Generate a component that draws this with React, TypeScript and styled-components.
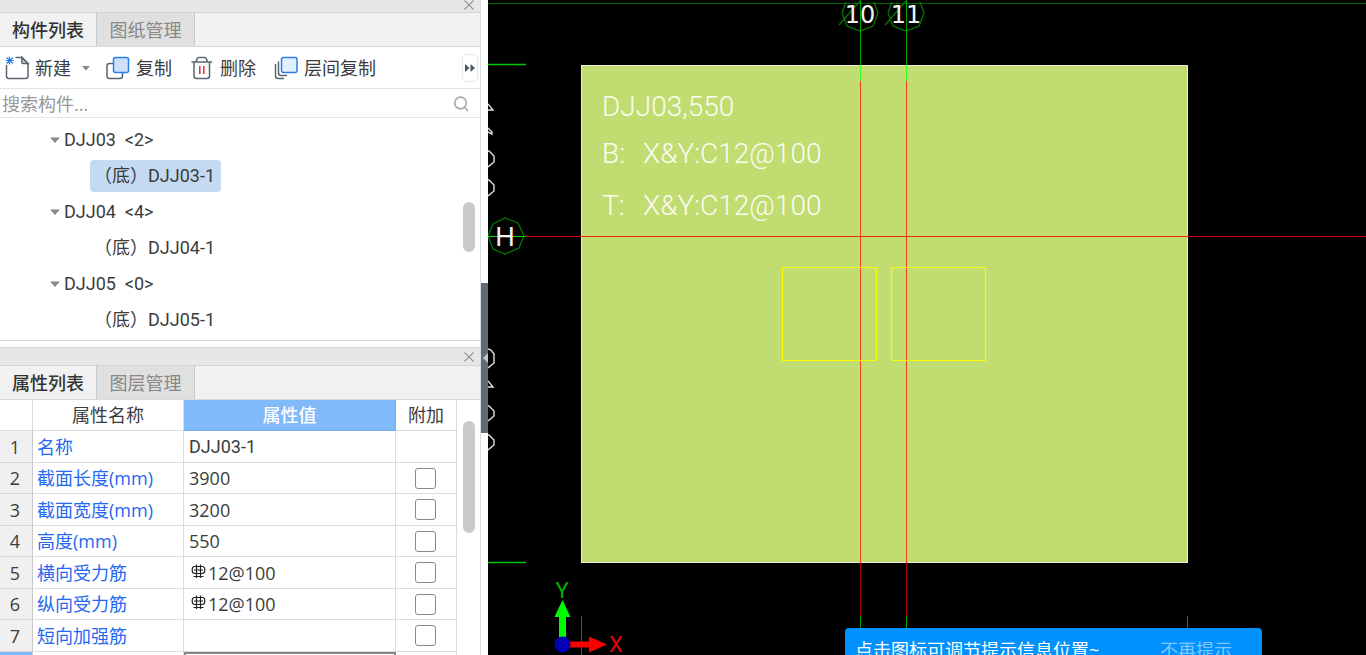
import React from "react";
import styled, { createGlobalStyle } from "styled-components";

const GlobalStyle = createGlobalStyle`
  *, *::before, *::after { box-sizing: border-box; }
  body {
    margin: 0;
    background: #fff;
    color: #3c3c3c;
    font-family: "Open Sans", "Noto Sans CJK SC", sans-serif;
    font-size: 18px;
    line-height: 24px;
  }
  button, input { font: inherit; color: inherit; }
  button { padding: 0; border: 0; background: none; }
`;

const CODE_FONT = `Roboto, "Noto Sans CJK SC", sans-serif`;

const Workspace = styled.div`
  display: flex;
  height: 100vh;
  overflow: hidden;
`;

const Sidebar = styled.aside`
  flex: none;
  display: flex;
  flex-direction: column;
  gap: 6px;
  width: 481px;
  border-right: 1px solid #dcdcdc;
`;

const Panel = styled.section<{ $grow?: boolean }>`
  display: flex;
  flex-direction: column;
  flex: ${(p) => (p.$grow ? "1" : "none")};
  min-height: 0;
  overflow: hidden;
`;

const TitleStrip = styled.header<{ $tall?: boolean }>`
  flex: none;
  display: flex;
  align-items: center;
  justify-content: flex-end;
  height: ${(p) => (p.$tall ? 19 : 13)}px;
  padding: ${(p) => (p.$tall ? "0 6px 0 0" : "0 6px 3px 0")};
  background: #e7e7e7;
  border-top: ${(p) => (p.$tall ? "1px solid #d6d6d6" : "0")};
  border-bottom: 1px solid #d2d4d6;
`;

const CloseButton = styled.button`
  display: flex;
  width: 10px;
  height: 10px;
`;

const TabBar = styled.div`
  flex: none;
  display: flex;
  height: 34px;
  background: #f1f1f1;
  border-bottom: 1px solid #d8dadc;
`;

const Tab = styled.button<{ $active?: boolean }>`
  width: ${(p) => (p.$active ? 97 : 98)}px;
  border-right: 1px solid #c6cacf;
  background: ${(p) => (p.$active ? "#f1f1f1" : "#e0e0e0")};
  color: ${(p) => (p.$active ? "#333" : "#888")};
  font-weight: ${(p) => (p.$active ? 500 : 400)};
`;

const Toolbar = styled.div`
  flex: none;
  display: flex;
  align-items: center;
  height: 42px;
  padding: 1px 2px 0 5px;
  border-bottom: 1px solid #e4e4e4;
`;

const ToolButton = styled.button<{ $gap?: number }>`
  display: flex;
  align-items: center;
  gap: 5px;
  margin-right: ${(p) => p.$gap ?? 18}px;
`;

const MoreButton = styled.button`
  display: flex;
  align-items: center;
  justify-content: center;
  width: 16px;
  height: 28px;
  margin-left: auto;
  border: 1px solid #e8e8e8;
  border-radius: 5px;
`;

const SearchRow = styled.label`
  flex: none;
  display: flex;
  align-items: center;
  height: 29px;
  padding: 1px 11px 0 2px;
  border-bottom: 1px solid #e4e4e4;
`;

const SearchInput = styled.input`
  flex: 1;
  min-width: 0;
  padding: 0;
  border: 0;
  outline: 0;
  background: none;
  &::placeholder { color: #999; opacity: 1; }
`;

const TreeArea = styled.div`
  display: flex;
  border-bottom: 1px solid #dadada;
  font-family: ${CODE_FONT};
`;

const TreeList = styled.ul`
  flex: 1;
  margin: 0;
  padding: 4px 0 2px 50px;
  list-style: none;
`;

const TreeItem = styled.li`
  display: flex;
  align-items: center;
  height: 36px;
`;

const GroupButton = styled.button`
  display: flex;
  align-items: center;
  gap: 4px;
  white-space: pre;
`;

const LeafButton = styled.button<{ $selected?: boolean }>`
  height: 32px;
  margin-left: 40px;
  padding: 0 6px 0 4px;
  border-radius: 4px;
  background: ${(p) => (p.$selected ? "#c3daf2" : "transparent")};
`;

const ScrollTrack = styled.div<{ $offset: number }>`
  flex: none;
  width: 17px;
  padding-top: ${(p) => p.$offset}px;
`;

const ScrollThumb = styled.div<{ $length: number }>`
  width: 12px;
  height: ${(p) => p.$length}px;
  border-radius: 6px;
  background: #cacaca;
`;

const TableArea = styled.div`
  display: flex;
  flex: 1;
  gap: 6px;
  min-height: 0;
  overflow: hidden;
`;

const PropertyTable = styled.table`
  flex: none;
  align-self: flex-start;
  width: 457px;
  table-layout: fixed;
  border-spacing: 0;
  tbody tr { height: 31px; }
  tbody tr:nth-child(odd) { height: 32px; }
`;

const HeadCell = styled.th<{ $w: number; $on?: boolean }>`
  width: ${(p) => p.$w}px;
  height: 31px;
  padding: 0;
  border-right: 1px solid ${(p) => (p.$on ? "#74aff0" : "#dcdcdc")};
  border-bottom: 1px solid ${(p) => (p.$on ? "#74aff0" : "#dcdcdc")};
  background: ${(p) => (p.$on ? "#80baf9" : "#fff")};
  color: ${(p) => (p.$on ? "#fff" : "inherit")};
  font-weight: ${(p) => (p.$on ? 500 : 400)};
`;

const IndexCell = styled.th<{ $on?: boolean }>`
  padding: 0 2px 0 0;
  border-right: 1px solid #c8c8c8;
  border-bottom: 1px solid #d4d4d4;
  background: ${(p) => (p.$on ? "#80baf9" : "#f0f0f0")};
  font-weight: 400;
`;

const Cell = styled.td<{ $kind?: "name" | "code" | "check" | "editing" }>`
  padding: ${(p) => (p.$kind === "check" ? "0 1px 0 0" : p.$kind === "name" ? "0 4px" : "0 5px")};
  border-right: 1px solid #dcdcdc;
  border-bottom: 1px solid #dcdcdc;
  color: ${(p) => (p.$kind === "name" ? "#2468f2" : "inherit")};
  text-align: ${(p) => (p.$kind === "check" ? "center" : "left")};
  ${(p) => p.$kind === "code" && `font-family: ${CODE_FONT};`}
  ${(p) => p.$kind === "editing" && "border: 2px solid #858585;"}
`;

const RebarValue = styled.span`
  display: flex;
  align-items: center;
  gap: 2px;
  padding-left: 2px;
`;

const Checkbox = styled.input`
  appearance: none;
  display: block;
  width: 21px;
  height: 21px;
  margin: 0 auto;
  border: 1px solid #8a8a8a;
  border-radius: 3px;
  background: #fff;
`;

const Splitter = styled.div`
  flex: none;
  display: flex;
  align-items: center;
  width: 7px;
  padding-top: 61px;
  background: #fff;
`;

const CollapseButton = styled.button`
  display: flex;
  align-items: center;
  justify-content: flex-end;
  width: 7px;
  height: 150px;
  background: #5f6b77;
`;

const Viewport = styled.main`
  position: relative;
  flex: 1;
  min-width: 0;
  overflow: hidden;
  background: #000;
`;

const Drawing = styled.svg`
  display: block;
  width: 100%;
  height: 100%;
`;

const Toast = styled.div`
  position: absolute;
  right: 104px;
  bottom: -17px;
  display: flex;
  align-items: center;
  justify-content: space-between;
  width: 417px;
  height: 44px;
  padding: 0 30px 0 10px;
  border-radius: 4px;
  background: #0091ff;
  color: #fff;
`;

const DismissButton = styled.button`
  color: #80c8ff;
`;

const INK = "#5b6472";
const BLUE = "#2b7de9";

const CloseIcon = () => (
  <svg width="10" height="10" viewBox="0 0 10 10" stroke="#999" strokeWidth="1.3" aria-hidden="true">
    <path d="M0.5 0.5 9.5 9.5M9.5 0.5 0.5 9.5" />
  </svg>
);

const NewIcon = () => (
  <svg width="25" height="26" viewBox="0 0 25 26" fill="none" stroke={INK} strokeWidth="1.5" aria-hidden="true">
    <path d="M1.5 10V21q0 2.5 2.5 2.5H20.5q2.5 0 2.5-2.5V8.5L17 2.5H10.5" />
    <path d="M16.8 2.5V7q0 1.5 1.5 1.5H23z" fill={INK} fillOpacity="0.25" />
    <path d="M4.5 1.5v8M0.8 5.5h8M1.5 2.5l6.5 6M8 2.500l-6.5 6" stroke={BLUE} strokeWidth="1.2" />
  </svg>
);

const CopyIcon = () => (
  <svg width="26" height="26" viewBox="0 0 26 26" fill="none" stroke={INK} strokeWidth="1.5" aria-hidden="true">
    <path d="M8 8.5H4.5q-2.5 0-2.5 2.5V21q0 2.5 2.5 2.5H15q2.5 0 2.5-2.5V17.5" />
    <rect x="8.5" y="2.5" width="15" height="15" rx="2" fill="#cfe1fa" stroke={BLUE} />
  </svg>
);

const DeleteIcon = () => (
  <svg width="25" height="26" viewBox="0 0 25 26" fill="none" stroke={INK} strokeWidth="1.5" aria-hidden="true">
    <path d="M1.5 7H22M6 7l1-3q.5-1.5 2-1.5h5.5q1.5 0 2 1.5l1 3M4 7V21q0 2.5 2.5 2.5H17q2.5 0 2.5-2.5V7" />
    <path d="M9.8 11v8M13.8 11v8" stroke="#e02f2f" />
  </svg>
);

const LayerCopyIcon = () => (
  <svg width="25" height="26" viewBox="0 0 25 26" fill="none" stroke={INK} strokeWidth="1.5" aria-hidden="true">
    <path d="M1.5 9V21q0 2.5 2.5 2.5H10M4.5 6.5V18q0 2.5 2.5 2.5H13" />
    <rect x="7.5" y="2.5" width="15.5" height="15" rx="2" fill="#e4effd" stroke={BLUE} />
  </svg>
);

const Caret = ({ width = 10 }: { width?: number }) => (
  <svg width={width} height="6" viewBox="0 0 10 6" aria-hidden="true">
    <path d="M0 0.5H10L5 6z" fill="#8a8a8a" />
  </svg>
);

const SearchIcon = () => (
  <svg width="16" height="16" viewBox="0 0 16 16" fill="none" stroke="#aaa" strokeWidth="1.7" aria-hidden="true">
    <circle cx="7.5" cy="7" r="5.8" />
    <path d="M11.5 11.5 15 15" />
  </svg>
);

const RebarIcon = () => (
  <svg width="15" height="18" viewBox="0 0 15 18" fill="none" stroke="#222" strokeWidth="1.2" aria-hidden="true">
    <path d="M5.5 0.5V14M9.500 0.500V14M5 2.500H3.500Q1.200 2.500 1.200 6t2.300 3.500H11.500Q13.800 9.500 13.800 6T11.500 2.500H5M3 6H12M2.500 12.500H12.500" />
  </svg>
);

interface PanelHeadProps {
  active: string;
  other: string;
  tall?: boolean;
}

const PanelHead = ({ active, other, tall }: PanelHeadProps) => (
  <>
    <TitleStrip $tall={tall}>
      <CloseButton aria-label="关闭"><CloseIcon /></CloseButton>
    </TitleStrip>
    <TabBar role="tablist">
      <Tab role="tab" aria-selected="true" $active>{active}</Tab>
      <Tab role="tab" aria-selected="false">{other}</Tab>
    </TabBar>
  </>
);

const groups = [
  { name: "DJJ03", count: 2, selected: true },
  { name: "DJJ04", count: 4, selected: false },
  { name: "DJJ05", count: 0, selected: false },
];

const properties = [
  { name: "名称", value: "DJJ03-1", check: false },
  { name: "截面长度(mm)", value: "3900", check: true },
  { name: "截面宽度(mm)", value: "3200", check: true },
  { name: "高度(mm)", value: "550", check: true },
  { name: "横向受力筋", value: "12@100", check: true, rebar: true },
  { name: "纵向受力筋", value: "12@100", check: true, rebar: true },
  { name: "短向加强筋", value: "", check: true },
];

const AxisBubble = ({ x, label }: { x: number; label: string }) => (
  <g>
    <path
      d={`M${x - 18} 13l4-11M${x + 14} 2l4 11-5 13-13 5-13-5-5-13M${x - 21} 25 ${x} 1`}
      fill="none"
      stroke="#007a00"
      strokeWidth="1.3"
    />
    <text x={x} y="23" textAnchor="middle" fill="#f2f2f2" fontSize="24" fontFamily="'DejaVu Sans', sans-serif">
      {label}
    </text>
    <path d={`M${x + 0.5} 0V65`} stroke="#00a400" />
    <path d={`M${x + 0.5} 65V81`} stroke="#34ff1c" />
    <path d={`M${x + 0.5} 81V562`} stroke="#f5401e" />
    <path d={`M${x + 0.5} 562V616`} stroke="#a80000" />
    <path d={`M${x + 0.5} 616V640`} stroke="#00a400" />
  </g>
);

const FoundationDrawing = () => (
  <Drawing role="img" aria-label="DJJ03">
    <path d="M0 3.5H2000" stroke="#006400" />
    <path d="M0 64.5H38M0 562.5H38" stroke="#00c800" strokeWidth="1.4" />
    <path d="M93.5 616V660M699.5 616V660" stroke="#008c00" />
    <rect x="93.5" y="65.5" width="606" height="497" fill="#c1dc70" stroke="#e9ebe2" />
    <g fill="#fbfdf4" fontSize="28" fontFamily="Roboto, sans-serif" fontWeight="300">
      <text x="114" y="116">DJJ03,550</text>
      <text x="114" y="163">B:</text>
      <text x="155" y="163">X&amp;Y:C12@100</text>
      <text x="114" y="215">T:</text>
      <text x="155" y="215">X&amp;Y:C12@100</text>
    </g>
    <AxisBubble x={372} label="10" />
    <AxisBubble x={418} label="11" />
    <path d="M38 236.500H2000" stroke="#d00000" />
    <path d="M93 236.500H699" stroke="#f5280c" />
    <path d="M17 218l13 5 6 13-5 12-14 6-12-5-5-13 5-12z" fill="none" stroke="#007a00" strokeWidth="1.3" />
    <path d="M0 236.500H38" stroke="#00d400" />
    <text x="17" y="246" textAnchor="middle" fill="#f2f2f2" fontSize="27" fontFamily="'Liberation Sans', sans-serif">H</text>
    <path d="M294.500 267.500H388.500V360.500H294.500zM403.500 267.500H497.500V360.500H403.500z" fill="none" stroke="#fafa00" strokeWidth="1.2" />
    <path
      d="M0 104l5 6H0M0 128l4 4v2l-4-2M0 151h1l5 5v6l-6 5M0 180h1l5 5v6l-6 5M0 349l3 1 3 4v9l-6 5M0 381l5 6H0M0 406h1l5 5v5l-6 5M0 435h1l5 5v5l-6 5"
      fill="none"
      stroke="#e0e0e0"
      strokeWidth="1.4"
    />
    <path d="M71 617h7v24h-7zM74.500 600l8 17h-16z" fill="#00fa00" />
    <path d="M78 641.500h24v6H78zM101 636.500l18 8-18 8z" fill="#fa0000" />
    <circle cx="74.500" cy="644.500" r="8" fill="#0000b4" />
    <g fontSize="22" fontFamily="Roboto, sans-serif" textAnchor="middle">
      <text x="74" y="598" fill="#00b400">Y</text>
      <text x="128" y="652" fill="#e60000">X</text>
    </g>
  </Drawing>
);

export default function App() {
  return (
    <>
      <GlobalStyle />
      <Workspace>
        <Sidebar>
          <Panel>
            <PanelHead active="构件列表" other="图纸管理" />
            <Toolbar>
              <ToolButton $gap={11}><NewIcon />新建</ToolButton>
              <ToolButton $gap={15} aria-label="新建选项"><Caret width={8} /></ToolButton>
              <ToolButton><CopyIcon />复制</ToolButton>
              <ToolButton><DeleteIcon />删除</ToolButton>
              <ToolButton><LayerCopyIcon />层间复制</ToolButton>
              <MoreButton aria-label="更多">
                <svg width="12" height="8" viewBox="0 0 12 8" fill="#4d5866" aria-hidden="true">
                  <path d="M1 0 5.5 4 1 8zM6.5 0 11 4 6.5 8z" />
                </svg>
              </MoreButton>
            </Toolbar>
            <SearchRow>
              <SearchInput type="text" placeholder="搜索构件..." aria-label="搜索构件" />
              <SearchIcon />
            </SearchRow>
            <TreeArea>
              <TreeList>
                {groups.map((g) => (
                  <React.Fragment key={g.name}>
                    <TreeItem>
                      <GroupButton><Caret />{`${g.name}  <${g.count}>`}</GroupButton>
                    </TreeItem>
                    <TreeItem>
                      <LeafButton $selected={g.selected}>{`（底）${g.name}-1`}</LeafButton>
                    </TreeItem>
                  </React.Fragment>
                ))}
              </TreeList>
              <ScrollTrack $offset={84}><ScrollThumb $length={50} /></ScrollTrack>
            </TreeArea>
          </Panel>

          <Panel $grow>
            <PanelHead active="属性列表" other="图层管理" tall />
            <TableArea>
              <PropertyTable>
                <thead>
                  <tr>
                    <HeadCell $w={33} />
                    <HeadCell $w={151}>属性名称</HeadCell>
                    <HeadCell $w={212} $on>属性值</HeadCell>
                    <HeadCell $w={61}>附加</HeadCell>
                  </tr>
                </thead>
                <tbody>
                  {properties.map((p, i) => (
                    <tr key={p.name}>
                      <IndexCell scope="row">{i + 1}</IndexCell>
                      <Cell $kind="name">{p.name}</Cell>
                      <Cell $kind={i === 0 ? "code" : undefined}>
                        {p.rebar ? <RebarValue><RebarIcon />{p.value}</RebarValue> : p.value}
                      </Cell>
                      <Cell $kind="check">
                        {p.check && <Checkbox type="checkbox" aria-label={`附加 ${p.name}`} />}
                      </Cell>
                    </tr>
                  ))}
                  <tr>
                    <IndexCell $on />
                    <Cell $kind="name" />
                    <Cell $kind="editing" />
                    <Cell $kind="check" />
                  </tr>
                </tbody>
              </PropertyTable>
              <ScrollTrack $offset={21}><ScrollThumb $length={112} /></ScrollTrack>
            </TableArea>
          </Panel>
        </Sidebar>

        <Splitter>
          <CollapseButton aria-label="收起">
            <svg width="5" height="10" viewBox="0 0 5 10" aria-hidden="true">
              <path d="M5 0V10L0 5z" fill="#c3c8cd" />
            </svg>
          </CollapseButton>
        </Splitter>

        <Viewport>
          <FoundationDrawing />
          <Toast role="status">
            <span>点击图标可调节提示信息位置~</span>
            <DismissButton>不再提示</DismissButton>
          </Toast>
        </Viewport>
      </Workspace>
    </>
  );
}
